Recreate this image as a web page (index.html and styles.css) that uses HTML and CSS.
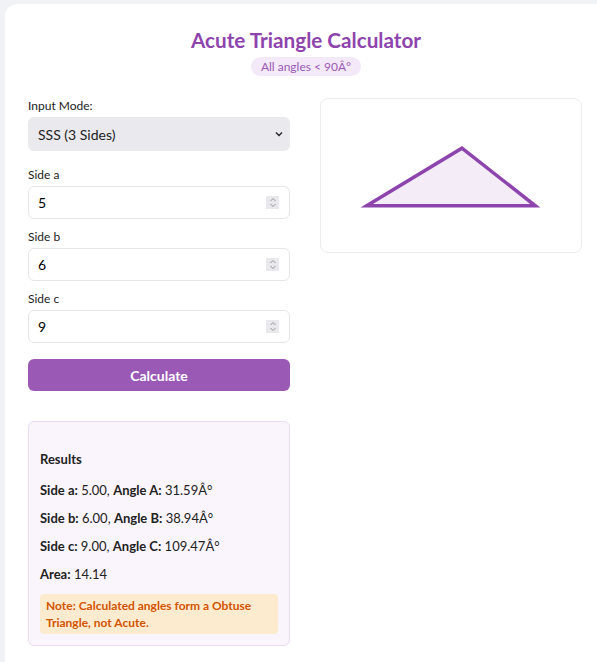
FILE: index.html
```html
<!DOCTYPE html>
<html lang="en">
<head>
<meta charset="utf-8">
<title>Acute Triangle Calculator</title>
<link rel="stylesheet" href="styles.css">
</head>
<body>
<div class="card">
  <header class="head">
    <h1 class="title">Acute Triangle Calculator</h1>
    <span class="badge">All angles &lt; 90Â°</span>
  </header>
  <div class="cols">
    <div class="left">
      <label class="lbl">Input Mode:</label>
      <div class="select">
        <span>SSS (3 Sides)</span>
        <svg class="chev" width="8" height="6" viewBox="0 0 8 6"><path d="M1 1.5 L4 4.5 L7 1.5" fill="none" stroke="#222" stroke-width="1.3"/></svg>
      </div>
      <label class="lbl gap">Side a</label>
      <div class="field"><input class="inp" value="5"><span class="spin"><svg width="8" height="11" viewBox="0 0 8 11"><path d="M1.5 4 L4 1.5 L6.5 4 M1.5 7 L4 9.5 L6.5 7" fill="none" stroke="#8a8a8a" stroke-width="0.9"/></svg></span></div>
      <label class="lbl gap2">Side b</label>
      <div class="field"><input class="inp" value="6"><span class="spin"><svg width="8" height="11" viewBox="0 0 8 11"><path d="M1.5 4 L4 1.5 L6.5 4 M1.5 7 L4 9.5 L6.5 7" fill="none" stroke="#8a8a8a" stroke-width="0.9"/></svg></span></div>
      <label class="lbl gap2">Side c</label>
      <div class="field"><input class="inp" value="9"><span class="spin"><svg width="8" height="11" viewBox="0 0 8 11"><path d="M1.5 4 L4 1.5 L6.5 4 M1.5 7 L4 9.5 L6.5 7" fill="none" stroke="#8a8a8a" stroke-width="0.9"/></svg></span></div>
      <button class="btn">Calculate</button>
      <div class="results">
        <h3 class="rtitle">Results</h3>
        <p class="row"><b>Side a:</b> 5.00, <b>Angle A:</b> 31.59Â°</p>
        <p class="row"><b>Side b:</b> 6.00, <b>Angle B:</b> 38.94Â°</p>
        <p class="row"><b>Side c:</b> 9.00, <b>Angle C:</b> 109.47Â°</p>
        <p class="row"><b>Area:</b> 14.14</p>
        <div class="note">Note: Calculated angles form a Obtuse Triangle, not Acute.</div>
      </div>
    </div>
    <div class="right">
      <div class="viz">
        <svg width="262" height="155" viewBox="0 0 262 155">
          <polygon points="46,108 142,50 216,108" fill="#f4ecf7" stroke="#8e44ad" stroke-width="3.5"/>
        </svg>
      </div>
    </div>
  </div>
</div>
</body>
</html>
```
FILE: styles.css
```css
html, body {
  margin: 0;
  padding: 0;
  background: #f0f2f5;
  overflow: hidden;
}
body {
  font-family: Lato, "Noto Sans", sans-serif;
  color: #222;
  width: 620px;
  padding: 4px 0 0 5px;
}
.card {
  background: #fff;
  border-radius: 12px;
  width: 602px;
  height: 700px;
  box-sizing: border-box;
  padding: 23px 23px;
}
.head {
  display: flex;
  flex-direction: column;
  align-items: center;
  margin-bottom: 22px;
}
.title {
  margin: 0;
  font-size: 20.7px;
  line-height: 27px;
  font-weight: 700;
  color: #8e44ad;
}
.badge {
  margin-top: 3px;
  background: #f3e9f8;
  color: #9b59b6;
  font-size: 12px;
  line-height: 15px;
  padding: 2px 10px;
  border-radius: 10px;
}
.cols {
  display: grid;
  grid-template-columns: 262px 262px;
  column-gap: 30px;
  align-items: start;
}
.left {
  display: flex;
  flex-direction: column;
}
.lbl {
  font-size: 12px;
  line-height: 15px;
  margin-bottom: 4px;
  color: #222;
}
.gap { margin-top: 16px; }
.gap2 { margin-top: 10px; }
.select {
  height: 34px;
  background: #e9e9ee;
  border-radius: 6px;
  display: flex;
  align-items: center;
  justify-content: space-between;
  padding: 0 7px 0 10px;
  font-size: 14px;
}
.field {
  height: 33px;
  box-sizing: border-box;
  border: 1px solid #e6e6e6;
  border-radius: 6px;
  display: flex;
  align-items: center;
  padding: 0 10px 0 9px;
}
.inp {
  flex: 1;
  border: 0;
  outline: 0;
  font-family: inherit;
  font-size: 14px;
  color: #000;
  padding: 0;
  background: transparent;
  min-width: 0;
}
.spin {
  width: 13px;
  height: 13px;
  background: #e9e9ed;
  display: flex;
  align-items: center;
  justify-content: center;
}
.btn {
  margin-top: 16px;
  height: 32px;
  border: 0;
  border-radius: 6px;
  background: #9b59b6;
  color: #fff;
  font-family: inherit;
  font-weight: 700;
  font-size: 14px;
}
.results {
  margin-top: 30px;
  background: #faf4fc;
  border: 1px solid #eadcf1;
  border-radius: 6px;
  padding: 12px 11px 12px 11px;
  height: 225px;
  box-sizing: border-box;
}
.rtitle {
  margin: 17px 0 0;
  padding-bottom: 3px;
  font-size: 13px;
  line-height: 16px;
  font-weight: 700;
}
.row {
  margin: 12px 0 0;
  font-size: 13px;
  line-height: 16px;
}
.note {
  margin-top: 12px;
  background: #fdebd0;
  color: #d35400;
  font-weight: 700;
  font-size: 12px;
  line-height: 17px;
  padding: 3px 6px 3px 6px;
  border-radius: 4px;
}
.viz {
  height: 155px;
  box-sizing: border-box;
  border: 1px solid #ececec;
  border-radius: 8px;
  display: flex;
  align-items: center;
  justify-content: center;
}
.viz svg { display: block; }
```
